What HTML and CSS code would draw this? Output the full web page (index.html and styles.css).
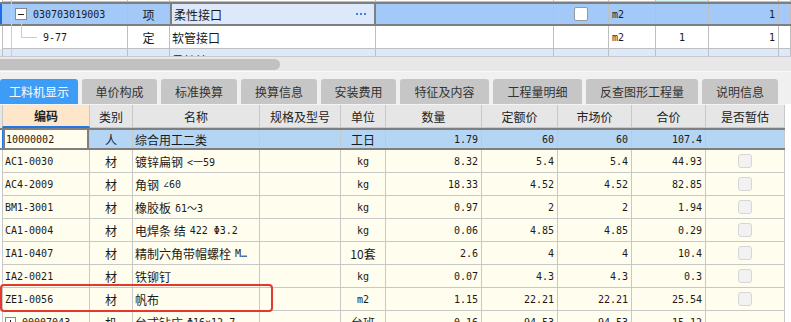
FILE: index.html
```html
<!DOCTYPE html>
<html lang="zh">
<head>
<meta charset="utf-8">
<title>工料机显示</title>
<link rel="stylesheet" href="styles.css">
</head>
<body>
<div class="app">
  <div class="top">
    <div class="trow prev">
      <div class="tc code"></div><div class="tc"></div><div class="tc"></div><div class="tc"></div><div class="tc"></div><div class="tc"></div><div class="tc cyan"></div><div class="tc"></div><div class="tc"></div>
    </div>
    <div class="trow sel">
      <div class="tc code mono lvl1">030703019003</div>
      <div class="tc c">项</div>
      <div class="tc name focus"><span class="grow">柔性接口</span><svg class="dots" width="11" height="3" viewBox="0 0 11 3"><rect x="0" y="0" width="2" height="2" fill="#3b82d8"/><rect x="4" y="0" width="2" height="2" fill="#3b82d8"/><rect x="8" y="0" width="2" height="2" fill="#3b82d8"/></svg></div>
      <div class="tc"></div>
      <div class="tc c"><span class="tchk"></span></div>
      <div class="tc mono">m2</div>
      <div class="tc"></div>
      <div class="tc r mono">1</div>
      <div class="tc"></div>
    </div>
    <div class="trow">
      <div class="tc code mono lvl2">9-77</div>
      <div class="tc c">定</div>
      <div class="tc name">软管接口</div>
      <div class="tc"></div>
      <div class="tc"></div>
      <div class="tc mono">m2</div>
      <div class="tc c mono">1</div>
      <div class="tc r mono">1</div>
      <div class="tc"></div>
    </div>
    <div class="trow alt">
      <div class="tc code mono lvl1">030703019004</div>
      <div class="tc c">项</div>
      <div class="tc name">柔性接口</div>
      <div class="tc"></div>
      <div class="tc c"><span class="tchk"></span></div>
      <div class="tc mono">m2</div>
      <div class="tc"></div>
      <div class="tc r mono">1</div>
      <div class="tc"></div>
    </div>
    <svg class="tree" width="40" height="56" viewBox="0 0 40 56">
      <line x1="11.5" y1="0" x2="11.5" y2="56" stroke="#f6c57e" stroke-width="1"/>
      <path d="M21.5 20 V37.5 H37" fill="none" stroke="#f6c57e" stroke-width="1"/>
      <rect x="15.5" y="8.5" width="11" height="11" fill="#fff" stroke="#8a8a8a"/>
      <line x1="18" y1="14.5" x2="24" y2="14.5" stroke="#222" stroke-width="1"/>
    </svg>
  </div>

  <div class="hscroll"><div class="thumb"></div></div>

  <div class="tabs">
    <div class="tab active w78">工料机显示</div>
    <div class="tab w75">单价构成</div>
    <div class="tab w76">标准换算</div>
    <div class="tab w76">换算信息</div>
    <div class="tab w75">安装费用</div>
    <div class="tab w89">特征及内容</div>
    <div class="tab w89">工程量明细</div>
    <div class="tab w112">反查图形工程量</div>
    <div class="tab w76">说明信息</div>
  </div>

  <div class="grid">
    <div class="drow head">
      <div class="hc first">编码</div>
      <div class="hc">类别</div>
      <div class="hc">名称</div>
      <div class="hc">规格及型号</div>
      <div class="hc">单位</div>
      <div class="hc">数量</div>
      <div class="hc">定额价</div>
      <div class="hc">市场价</div>
      <div class="hc">合价</div>
      <div class="hc">是否暂估</div>
    </div>

    <div class="drow dsel">
      <div class="dc first mono">10000002</div>
      <div class="dc c">人</div>
      <div class="dc">综合用工二类</div>
      <div class="dc"></div>
      <div class="dc c">工日</div>
      <div class="dc r mono">1.79</div>
      <div class="dc r mono">60</div>
      <div class="dc r mono">60</div>
      <div class="dc r mono">107.4</div>
      <div class="dc"></div>
    </div>

    <div class="drow">
      <div class="dc first mono">AC1-0030</div>
      <div class="dc c">材</div>
      <div class="dc">镀锌扁钢 <span class="mono">&lt;一59</span></div>
      <div class="dc"></div>
      <div class="dc c mono">kg</div>
      <div class="dc r mono">8.32</div>
      <div class="dc r mono">5.4</div>
      <div class="dc r mono">5.4</div>
      <div class="dc r mono">44.93</div>
      <div class="dc c"><span class="chk"></span></div>
    </div>

    <div class="drow">
      <div class="dc first mono">AC4-2009</div>
      <div class="dc c">材</div>
      <div class="dc">角钢 <span class="mono">∠60</span></div>
      <div class="dc"></div>
      <div class="dc c mono">kg</div>
      <div class="dc r mono">18.33</div>
      <div class="dc r mono">4.52</div>
      <div class="dc r mono">4.52</div>
      <div class="dc r mono">82.85</div>
      <div class="dc c"><span class="chk"></span></div>
    </div>

    <div class="drow">
      <div class="dc first mono">BM1-3001</div>
      <div class="dc c">材</div>
      <div class="dc">橡胶板 <span class="mono">δ1～3</span></div>
      <div class="dc"></div>
      <div class="dc c mono">kg</div>
      <div class="dc r mono">0.97</div>
      <div class="dc r mono">2</div>
      <div class="dc r mono">2</div>
      <div class="dc r mono">1.94</div>
      <div class="dc c"><span class="chk"></span></div>
    </div>

    <div class="drow">
      <div class="dc first mono">CA1-0004</div>
      <div class="dc c">材</div>
      <div class="dc">电焊条 结 <span class="mono">422 Φ3.2</span></div>
      <div class="dc"></div>
      <div class="dc c mono">kg</div>
      <div class="dc r mono">0.06</div>
      <div class="dc r mono">4.85</div>
      <div class="dc r mono">4.85</div>
      <div class="dc r mono">0.29</div>
      <div class="dc c"><span class="chk"></span></div>
    </div>

    <div class="drow">
      <div class="dc first mono">IA1-0407</div>
      <div class="dc c">材</div>
      <div class="dc">精制六角带帽螺栓 <span class="mono">M…</span></div>
      <div class="dc"></div>
      <div class="dc c">10套</div>
      <div class="dc r mono">2.6</div>
      <div class="dc r mono">4</div>
      <div class="dc r mono">4</div>
      <div class="dc r mono">10.4</div>
      <div class="dc c"><span class="chk"></span></div>
    </div>

    <div class="drow">
      <div class="dc first mono">IA2-0021</div>
      <div class="dc c">材</div>
      <div class="dc">铁铆钉</div>
      <div class="dc"></div>
      <div class="dc c mono">kg</div>
      <div class="dc r mono">0.07</div>
      <div class="dc r mono">4.3</div>
      <div class="dc r mono">4.3</div>
      <div class="dc r mono">0.3</div>
      <div class="dc c"><span class="chk"></span></div>
    </div>

    <div class="drow">
      <div class="dc first mono">ZE1-0056</div>
      <div class="dc c">材</div>
      <div class="dc">帆布</div>
      <div class="dc"></div>
      <div class="dc c mono">m2</div>
      <div class="dc r mono">1.15</div>
      <div class="dc r mono">22.21</div>
      <div class="dc r mono">22.21</div>
      <div class="dc r mono">25.54</div>
      <div class="dc c"><span class="chk"></span></div>
    </div>

    <div class="drow">
      <div class="dc first mono"><span class="plus"></span>00007043</div>
      <div class="dc c">机</div>
      <div class="dc">台式钻床 <span class="mono">Φ16×12.7</span></div>
      <div class="dc"></div>
      <div class="dc c">台班</div>
      <div class="dc r mono">0.16</div>
      <div class="dc r mono">94.53</div>
      <div class="dc r mono">94.53</div>
      <div class="dc r mono">15.12</div>
      <div class="dc c"></div>
    </div>

    <div class="mark"></div>
  </div>
</div>
</body>
</html>
```

FILE: styles.css
```css
* { box-sizing: border-box; }
html, body { margin: 0; padding: 0; }
body {
  width: 791px;
  height: 322px;
  overflow: hidden;
  background: #ffffff;
  font-family: "Noto Sans CJK SC", "Noto Sans", sans-serif;
  font-size: 12px;
  color: #1a1a1a;
}
.app { width: 791px; }

.mono {
  font-family: "DejaVu Sans Mono", "Liberation Mono", "Noto Sans CJK SC", monospace;
  font-size: 10px;
}

/* ---------- top grid ---------- */
.top {
  position: relative;
  height: 57px;
  overflow: hidden;
  background: #ffffff;
  border-bottom: 1px solid #c9c9c9;
}
.trow {
  display: grid;
  grid-template-columns: 128px 42px 206px 178px 55px 47px 53px 70px 12px;
  height: 23px;
  background: #ffffff;
}
.trow.prev { height: 2px; }
.trow.sel {
  height: 24px;
  background: #a3c9f9;
  border-top: 2px solid #7f7f7f;
  border-bottom: 2px solid #7f7f7f;
}
.trow.alt { background: #dde8fb; }
.tc {
  display: flex;
  align-items: center;
  padding: 0 3px;
  white-space: nowrap;
  overflow: hidden;
  border-right: 1px solid #bfbfbf;
  border-bottom: 1px solid #bfbfbf;
}
.trow.sel .tc { border-bottom: 0; }
.tc.code { margin-left: 2px; border-left: 1px solid #bfbfbf; }
.trow.sel .tc.code { margin-left: 0; border-left: 2px solid #1c6fe8; }
.tc.lvl1 { padding-left: 30px; }
.trow.sel .tc.lvl1 { padding-left: 31px; }
.tc.lvl2 { padding-left: 40px; }
.tc.c { justify-content: center; }
.tc.r { justify-content: flex-end; }
.tc.cyan { background: #d6f3ef; }
.tc.name { padding-left: 2px; }
.tc.focus {
  background: #dde8fb;
  border-left: 2px solid #7f7f7f;
  border-right: 2px solid #7f7f7f;
  padding-right: 7px;
}
.grow { flex: 1; }
.dots { display: block; margin-top: 1px; }
.tchk {
  display: block;
  width: 14px;
  height: 14px;
  background: #ffffff;
  border: 1px solid #9a9a9a;
  border-radius: 2px;
}
.trow.alt .tchk { margin-top: 6px; }
.tree {
  position: absolute;
  left: 0;
  top: 0;
}

/* ---------- scrollbar ---------- */
.hscroll {
  height: 15px;
  background: #e8e8e8;
  padding-top: 2px;
  border-bottom: 1px solid #fafafa;
}
.thumb {
  width: 280px;
  height: 11px;
  background: #c1c1c1;
  border-radius: 0 6px 6px 0;
}

/* ---------- tabs ---------- */
.tabs {
  display: flex;
  gap: 4px;
  height: 32px;
  padding-top: 7px;
  background: #f0f0f0;
}
.tab {
  height: 25px;
  display: flex;
  align-items: center;
  justify-content: center;
  background: #c6c6c6;
  color: #333333;
  border-radius: 3px 3px 0 0;
  font-size: 12px;
  white-space: nowrap;
}
.tab.active { background: #3d9cf5; color: #ffffff; }
.w75 { width: 75px; }
.w76 { width: 76px; }
.w78 { width: 78px; }
.w89 { width: 89px; }
.w112 { width: 112px; }

/* ---------- material grid ---------- */
.grid {
  position: relative;
  background: #ffffff;
}
.drow {
  display: grid;
  grid-template-columns: 88px 43px 127px 81px 45px 96px 76px 74px 74px 79px;
  width: 785px;
  height: 23px;
  padding-left: 2px;
}
.drow.head {
  height: 24px;
  background: #e6e6e6;
  border-top: 1px solid #f4f4f4;
}
.hc {
  display: flex;
  align-items: center;
  justify-content: center;
  background: #e6e6e6;
  color: #222222;
  border-right: 1px solid #c8c8c8;
  border-bottom: 1px solid #c8c8c8;
  white-space: nowrap;
}
.hc.first {
  background: #fde6c9;
  font-weight: bold;
  border-left: 1px solid #c8c8c8;
  border-bottom: 2px solid #1e78e6;
}
.dc {
  display: flex;
  align-items: center;
  padding: 0 2px;
  background: #fffeee;
  border-right: 1px solid #c8c8c8;
  border-bottom: 1px solid #c8c8c8;
  white-space: nowrap;
  overflow: hidden;
}
.dc .mono { margin-left: 4px; }
.dc.first { border-left: 1px solid #c8c8c8; }
.dc.c { justify-content: center; }
.dc.r { justify-content: flex-end; padding-right: 3px; }
.drow.dsel {
  height: 22px;
  border-top: 2px solid #7f7f7f;
  border-bottom: 2px solid #7f7f7f;
}
.drow.dsel .dc {
  background: #b5d5f5;
  border-bottom: 0;
}
.drow.dsel .dc.first {
  background: #fffeee;
  border-left: 1px solid #1e78e6;
  box-shadow: inset 2px 0 0 #7f7f7f, inset -2px 0 0 #7f7f7f;
  padding-left: 3px;
}
.chk {
  display: block;
  width: 14px;
  height: 14px;
  background: #f2f2f2;
  border: 1px solid #d6d6d6;
  border-radius: 3px;
}
.plus {
  position: relative;
  display: inline-block;
  width: 11px;
  height: 11px;
  margin-right: 6px;
  border: 1px solid #8a8a8a;
  background: #ffffff;
}
.plus::before, .plus::after {
  content: "";
  position: absolute;
  background: #222;
}
.plus::before { left: 2px; top: 4px; width: 5px; height: 1px; }
.plus::after { left: 4px; top: 2px; width: 1px; height: 5px; }

.mark {
  position: absolute;
  left: 0;
  top: 180px;
  width: 273px;
  height: 28px;
  border: 2px solid #e5372e;
  border-radius: 4px;
}
```
